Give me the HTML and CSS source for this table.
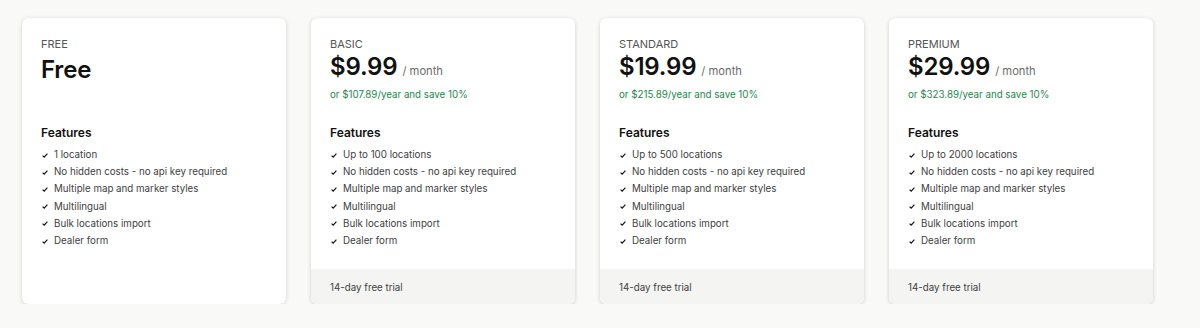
FILE: index.html
```html
<!DOCTYPE html>
<html lang="en">
<head>
<meta charset="utf-8">
<title>Pricing</title>
<link rel="stylesheet" href="styles.css">
</head>
<body>
<div class="plans">
  <div class="card">
    <div class="body">
      <div class="head">
        <div class="label">FREE</div>
        <div class="price price-free"><span class="amount">Free</span></div>
      </div>
      <div class="feat-title">Features</div>
      <ul class="list">
        <li><svg class="check" viewBox="0 0 6 5"><path d="M0.6 2.6 L2.2 4.1 L5.4 0.7"/></svg>1 location</li>
        <li><svg class="check" viewBox="0 0 6 5"><path d="M0.6 2.6 L2.2 4.1 L5.4 0.7"/></svg>No hidden costs - no api key required</li>
        <li><svg class="check" viewBox="0 0 6 5"><path d="M0.6 2.6 L2.2 4.1 L5.4 0.7"/></svg>Multiple map and marker styles</li>
        <li><svg class="check" viewBox="0 0 6 5"><path d="M0.6 2.6 L2.2 4.1 L5.4 0.7"/></svg>Multilingual</li>
        <li><svg class="check" viewBox="0 0 6 5"><path d="M0.6 2.6 L2.2 4.1 L5.4 0.7"/></svg>Bulk locations import</li>
        <li><svg class="check" viewBox="0 0 6 5"><path d="M0.6 2.6 L2.2 4.1 L5.4 0.7"/></svg>Dealer form</li>
      </ul>
    </div>
  </div>

  <div class="card">
    <div class="body">
      <div class="head">
        <div class="label">BASIC</div>
        <div class="price"><span class="amount">$9.99</span><span class="per">/ month</span></div>
        <div class="yearly">or $107.89/year and save 10%</div>
      </div>
      <div class="feat-title">Features</div>
      <ul class="list">
        <li><svg class="check" viewBox="0 0 6 5"><path d="M0.6 2.6 L2.2 4.1 L5.4 0.7"/></svg>Up to 100 locations</li>
        <li><svg class="check" viewBox="0 0 6 5"><path d="M0.6 2.6 L2.2 4.1 L5.4 0.7"/></svg>No hidden costs - no api key required</li>
        <li><svg class="check" viewBox="0 0 6 5"><path d="M0.6 2.6 L2.2 4.1 L5.4 0.7"/></svg>Multiple map and marker styles</li>
        <li><svg class="check" viewBox="0 0 6 5"><path d="M0.6 2.6 L2.2 4.1 L5.4 0.7"/></svg>Multilingual</li>
        <li><svg class="check" viewBox="0 0 6 5"><path d="M0.6 2.6 L2.2 4.1 L5.4 0.7"/></svg>Bulk locations import</li>
        <li><svg class="check" viewBox="0 0 6 5"><path d="M0.6 2.6 L2.2 4.1 L5.4 0.7"/></svg>Dealer form</li>
      </ul>
    </div>
    <div class="foot">14-day free trial</div>
  </div>

  <div class="card">
    <div class="body">
      <div class="head">
        <div class="label">STANDARD</div>
        <div class="price"><span class="amount">$19.99</span><span class="per">/ month</span></div>
        <div class="yearly">or $215.89/year and save 10%</div>
      </div>
      <div class="feat-title">Features</div>
      <ul class="list">
        <li><svg class="check" viewBox="0 0 6 5"><path d="M0.6 2.6 L2.2 4.1 L5.4 0.7"/></svg>Up to 500 locations</li>
        <li><svg class="check" viewBox="0 0 6 5"><path d="M0.6 2.6 L2.2 4.1 L5.4 0.7"/></svg>No hidden costs - no api key required</li>
        <li><svg class="check" viewBox="0 0 6 5"><path d="M0.6 2.6 L2.2 4.1 L5.4 0.7"/></svg>Multiple map and marker styles</li>
        <li><svg class="check" viewBox="0 0 6 5"><path d="M0.6 2.6 L2.2 4.1 L5.4 0.7"/></svg>Multilingual</li>
        <li><svg class="check" viewBox="0 0 6 5"><path d="M0.6 2.6 L2.2 4.1 L5.4 0.7"/></svg>Bulk locations import</li>
        <li><svg class="check" viewBox="0 0 6 5"><path d="M0.6 2.6 L2.2 4.1 L5.4 0.7"/></svg>Dealer form</li>
      </ul>
    </div>
    <div class="foot">14-day free trial</div>
  </div>

  <div class="card">
    <div class="body">
      <div class="head">
        <div class="label">PREMIUM</div>
        <div class="price"><span class="amount">$29.99</span><span class="per">/ month</span></div>
        <div class="yearly">or $323.89/year and save 10%</div>
      </div>
      <div class="feat-title">Features</div>
      <ul class="list">
        <li><svg class="check" viewBox="0 0 6 5"><path d="M0.6 2.6 L2.2 4.1 L5.4 0.7"/></svg>Up to 2000 locations</li>
        <li><svg class="check" viewBox="0 0 6 5"><path d="M0.6 2.6 L2.2 4.1 L5.4 0.7"/></svg>No hidden costs - no api key required</li>
        <li><svg class="check" viewBox="0 0 6 5"><path d="M0.6 2.6 L2.2 4.1 L5.4 0.7"/></svg>Multiple map and marker styles</li>
        <li><svg class="check" viewBox="0 0 6 5"><path d="M0.6 2.6 L2.2 4.1 L5.4 0.7"/></svg>Multilingual</li>
        <li><svg class="check" viewBox="0 0 6 5"><path d="M0.6 2.6 L2.2 4.1 L5.4 0.7"/></svg>Bulk locations import</li>
        <li><svg class="check" viewBox="0 0 6 5"><path d="M0.6 2.6 L2.2 4.1 L5.4 0.7"/></svg>Dealer form</li>
      </ul>
    </div>
    <div class="foot">14-day free trial</div>
  </div>
</div>
</body>
</html>
```

FILE: styles.css
```css
* { box-sizing: border-box; }

html, body {
  margin: 0;
  padding: 0;
  background: #f9f9f8;
  font-family: Inter, "Noto Sans", sans-serif;
  color: #1a1a1a;
}

.plans {
  display: flex;
  gap: 25px;
  padding: 18px 22px 0;
  align-items: stretch;
}

.card {
  width: 264px;
  flex: none;
  height: 286px;
  background: #fff;
  border-radius: 6px;
  box-shadow: 0 1px 4px rgba(0, 0, 0, 0.16), 0 0 1px rgba(0, 0, 0, 0.08);
  display: flex;
  flex-direction: column;
  overflow: hidden;
}

.body {
  flex: 1;
  padding: 18px 19px 0;
}

.head {
  height: 89px;
}

.label {
  font-size: 11px;
  line-height: 16px;
  color: #555;
}

.price {
  display: flex;
  align-items: baseline;
  gap: 5px;
  line-height: 29px;
}

.price-free {
  padding-top: 3px;
}

.amount {
  font-size: 24px;
  font-weight: 600;
  color: #111;
  letter-spacing: -0.2px;
}

.per {
  font-size: 11.2px;
  color: #6b6b6b;
}

.yearly {
  margin-top: 1px;
  font-size: 9.75px;
  line-height: 16px;
  color: #25864b;
}

.feat-title {
  font-size: 12px;
  line-height: 16px;
  font-weight: 600;
  color: #111;
}

.list {
  list-style: none;
  margin: 5px 0 0;
  padding: 0;
}

.list li {
  display: flex;
  align-items: center;
  font-size: 9.75px;
  line-height: 17.2px;
  color: #404040;
}

.check {
  width: 6px;
  height: 5px;
  margin: 1px 6px 0 1px;
  flex: none;
  fill: none;
  stroke: #111;
  stroke-width: 1.2;
}

.foot {
  height: 35px;
  padding: 12px 19px 10px;
  font-size: 9.75px;
  line-height: 13px;
  color: #404040;
  background: #f4f4f3;
}
```
